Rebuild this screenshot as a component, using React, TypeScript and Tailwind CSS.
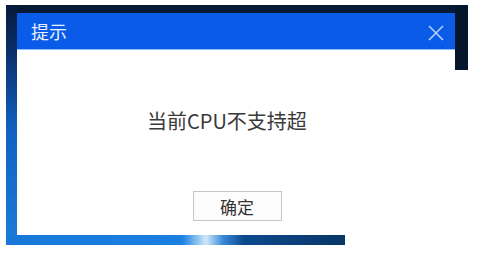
export default function App() {
  return (
    <div className="w-[481px] h-[253px] bg-white pt-[5px] pl-[6px] overflow-hidden font-['Noto_Sans_CJK_SC',sans-serif]">
      <div className="flex flex-col">
        <div className="flex">
          {/* left frame edge */}
          <div className="w-[11px] h-[230px] bg-[linear-gradient(to_bottom,#061a3a_0%,#0a3170_22%,#1262c2_55%,#1a7ad8_100%)]"></div>

          <div className="w-[438px] flex flex-col">
            <div className="h-[8px] bg-[#061a38]"></div>
            <div className="h-[37px] bg-[#0a5ce8] border-b border-[#8fbef5] flex items-center justify-between pl-[14px] pr-[11px]">
              <span className="text-[18px] leading-none text-[#e8f0ff] mt-[-1px]">提示</span>
              <svg width="16" height="16" viewBox="0 0 16 16" className="mt-[4px]">
                <path d="M1 1 L15 15 M15 1 L1 15" stroke="#b4d0fa" strokeWidth="1.6" fill="none" />
              </svg>
            </div>
            <div className="h-[185px] bg-white flex flex-col">
              <p className="mt-[60px] pl-[130px] text-[20px] leading-[22px] text-[#3a3a3a] whitespace-nowrap">
                当前CPU不支持超
              </p>
              <div className="flex justify-center mt-[59px] pl-[2px]">
                <button className="w-[89px] h-[30px] border border-[#c6c6c6] bg-[#fcfcfc] text-[17px] leading-none text-[#333]">
                  确定
                </button>
              </div>
            </div>
          </div>

          {/* right frame edge, only the top part shows */}
          <div className="w-[13px] h-[65px] bg-[#04152c]"></div>
        </div>

        <div className="w-[339px] h-[10px] bg-[linear-gradient(to_right,#1878d8_0%,#1a80e0_52%,#cfe8fa_59%,#3a8ad8_64%,#0c4a8c_70%,#0a3568_100%)]"></div>
      </div>
    </div>
  );
}
